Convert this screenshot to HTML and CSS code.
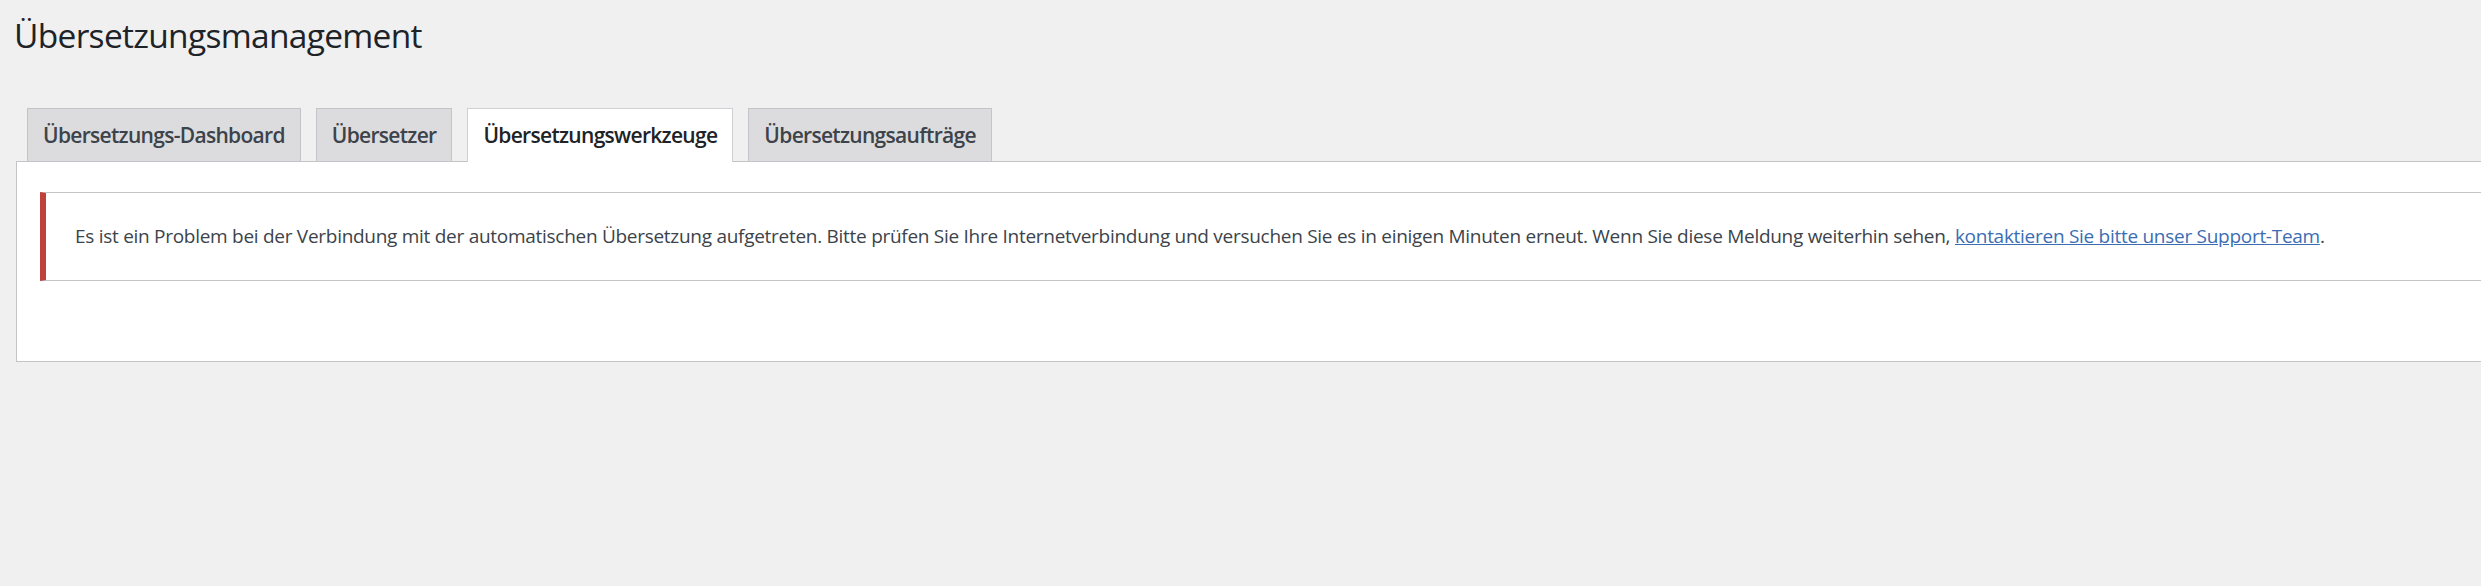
FILE: index.html
```html
<!DOCTYPE html>
<html lang="de">
<head>
<meta charset="utf-8">
<title>Übersetzungsmanagement</title>
<link rel="stylesheet" href="styles.css">
</head>
<body>
<div class="wrap">
  <h1 class="page-title">Übersetzungsmanagement</h1>
  <nav class="tabs">
    <a class="tab" href="#">Übersetzungs-Dashboard</a>
    <a class="tab" href="#">Übersetzer</a>
    <a class="tab tab-active" href="#">Übersetzungswerkzeuge</a>
    <a class="tab" href="#">Übersetzungsaufträge</a>
  </nav>
  <div class="panel">
    <div class="notice notice-error">
      <p>Es ist ein Problem bei der Verbindung mit der automatischen Übersetzung aufgetreten. Bitte prüfen Sie Ihre Internetverbindung und versuchen Sie es in einigen Minuten erneut. Wenn Sie diese Meldung weiterhin sehen, <a href="#" class="link">kontaktieren Sie bitte unser Support-Team</a>.</p>
    </div>
  </div>
</div>
</body>
</html>
```

FILE: styles.css
```css
html, body {
  margin: 0;
  padding: 0;
  background: #f0f0f1;
  overflow: hidden;
}

body {
  font-family: "Open Sans", "Noto Sans", "Liberation Sans", sans-serif;
  color: #3c434a;
}

.wrap {
  display: flex;
  flex-direction: column;
}

.page-title {
  margin: 0;
  padding: 13px 0 0 14px;
  font-size: 33.5px;
  line-height: 45px;
  font-weight: 400;
  color: #1d2327;
  letter-spacing: -0.7px;
}

.tabs {
  display: flex;
  align-items: flex-end;
  gap: 15px;
  margin-top: 50px;
  padding-left: 27px;
}

.tab {
  display: block;
  padding: 8px 15px;
  border: 1px solid #c3c4c7;
  border-bottom: 0;
  background: #dcdcde;
  color: #3c434a;
  font-size: 21px;
  line-height: 36px;
  font-weight: 600;
  text-decoration: none;
  letter-spacing: -0.7px;
  white-space: nowrap;
}

.tab-active {
  background: #fff;
  color: #1d2327;
  border-color: #d0d1d4;
  margin-bottom: -1px;
  padding-bottom: 9px;
  position: relative;
  z-index: 1;
}

.panel {
  margin-left: 16px;
  padding: 30px 0 80px 23px;
  background: #fff;
  border: 1px solid #c3c4c7;
  border-right: 0;
}

.notice {
  border: 1px solid #c3c4c7;
  border-right: 0;
  padding: 28px 0 29px 29px;
}

.notice-error {
  border-left: 6px solid #c0413c;
}

.notice p {
  margin: 0;
  font-size: 19px;
  line-height: 30px;
  letter-spacing: -0.28px;
  white-space: nowrap;
}

.link {
  color: #3b6db3;
  text-decoration: underline;
}
```
